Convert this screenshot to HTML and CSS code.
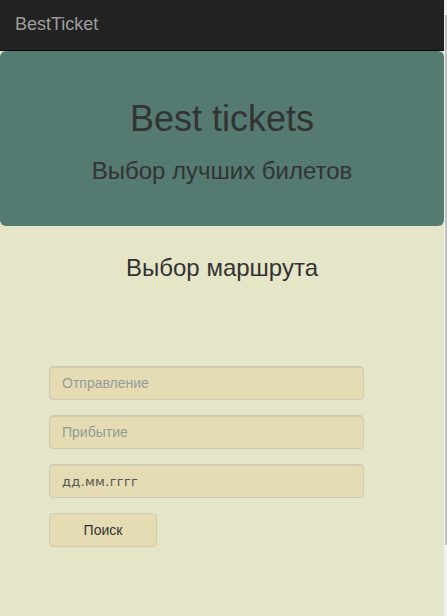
FILE: index.html
```html
<!DOCTYPE html>
<html lang="ru">
<head>
<meta charset="utf-8">
<title>BestTicket</title>
<link rel="stylesheet" href="styles.css">
</head>
<body>
<div class="page">
  <nav class="navbar">
    <span class="brand">BestTicket</span>
  </nav>
  <header class="jumbotron">
    <h1 class="jt-title">Best tickets</h1>
    <p class="jt-sub">Выбор лучших билетов</p>
  </header>
  <main class="content">
    <h3 class="section-title">Выбор маршрута</h3>
    <form class="route-form">
      <input class="field" type="text" placeholder="Отправление">
      <input class="field" type="text" placeholder="Прибытие">
      <input class="field field-date" type="text" value="дд.мм.гггг">
      <button class="btn" type="button">Поиск</button>
    </form>
  </main>
</div>
<div class="scrollbar"><div class="scroll-thumb"></div></div>
</body>
</html>
```

FILE: styles.css
```css
html, body {
  margin: 0;
  padding: 0;
  height: 100%;
}
body {
  background: #e5e5c8;
  font-family: "Liberation Sans", Arial, sans-serif;
  color: #333;
  overflow: hidden;
}
.page {
  width: calc(100% - 3px);
}
.navbar {
  height: 50px;
  background: #222222;
  border-bottom: 1px solid #080808;
  display: flex;
  align-items: center;
  padding: 0 15px;
  box-sizing: content-box;
}
.brand {
  font-size: 18px;
  color: #9d9d9d;
  line-height: 20px;
  margin-top: -2px;
}
.jumbotron {
  background: #547a72;
  border-radius: 6px;
  padding: 48px 15px 40px;
  text-align: center;
  color: #333;
}
.jt-title {
  margin: 0;
  font-size: 36px;
  font-weight: 400;
  line-height: 40px;
}
.jt-sub {
  margin: 17px 0 0;
  font-size: 24px;
  line-height: 30px;
}
.content {
  padding: 0 49px;
}
.section-title {
  text-align: center;
  margin: 28px 0 0;
  font-size: 24px;
  font-weight: 400;
  line-height: 28px;
  color: #333;
}
.route-form {
  margin-top: 84px;
  display: flex;
  flex-direction: column;
  align-items: flex-start;
  gap: 15px;
}
.field {
  width: 315px;
  height: 34px;
  box-sizing: border-box;
  padding: 6px 12px;
  font-family: "Liberation Sans", Arial, sans-serif;
  font-size: 14px;
  color: #555;
  background: #e5dcb3;
  border: 1px solid #cfcab3;
  border-radius: 4px;
  box-shadow: inset 0 1px 1px rgba(0,0,0,0.075);
  outline: none;
}
.field::placeholder {
  color: #999;
}
.field-date {
  font-family: "DejaVu Sans", sans-serif;
  font-size: 13px;
  letter-spacing: 0.3px;
  color: #555;
}
.btn {
  width: 108px;
  height: 34px;
  font-family: "Liberation Sans", Arial, sans-serif;
  font-size: 14px;
  color: #333;
  background: #e5dcb3;
  border: 1px solid #cfcab3;
  border-radius: 4px;
  padding: 6px 12px;
}
.scrollbar {
  position: fixed;
  top: 0;
  right: 0;
  width: 3px;
  height: 100%;
  background: #f1f1f1;
}
.scroll-thumb {
  position: absolute;
  top: 15px;
  left: 1px;
  width: 2px;
  height: 530px;
  background: #c1c1c1;
}
```
